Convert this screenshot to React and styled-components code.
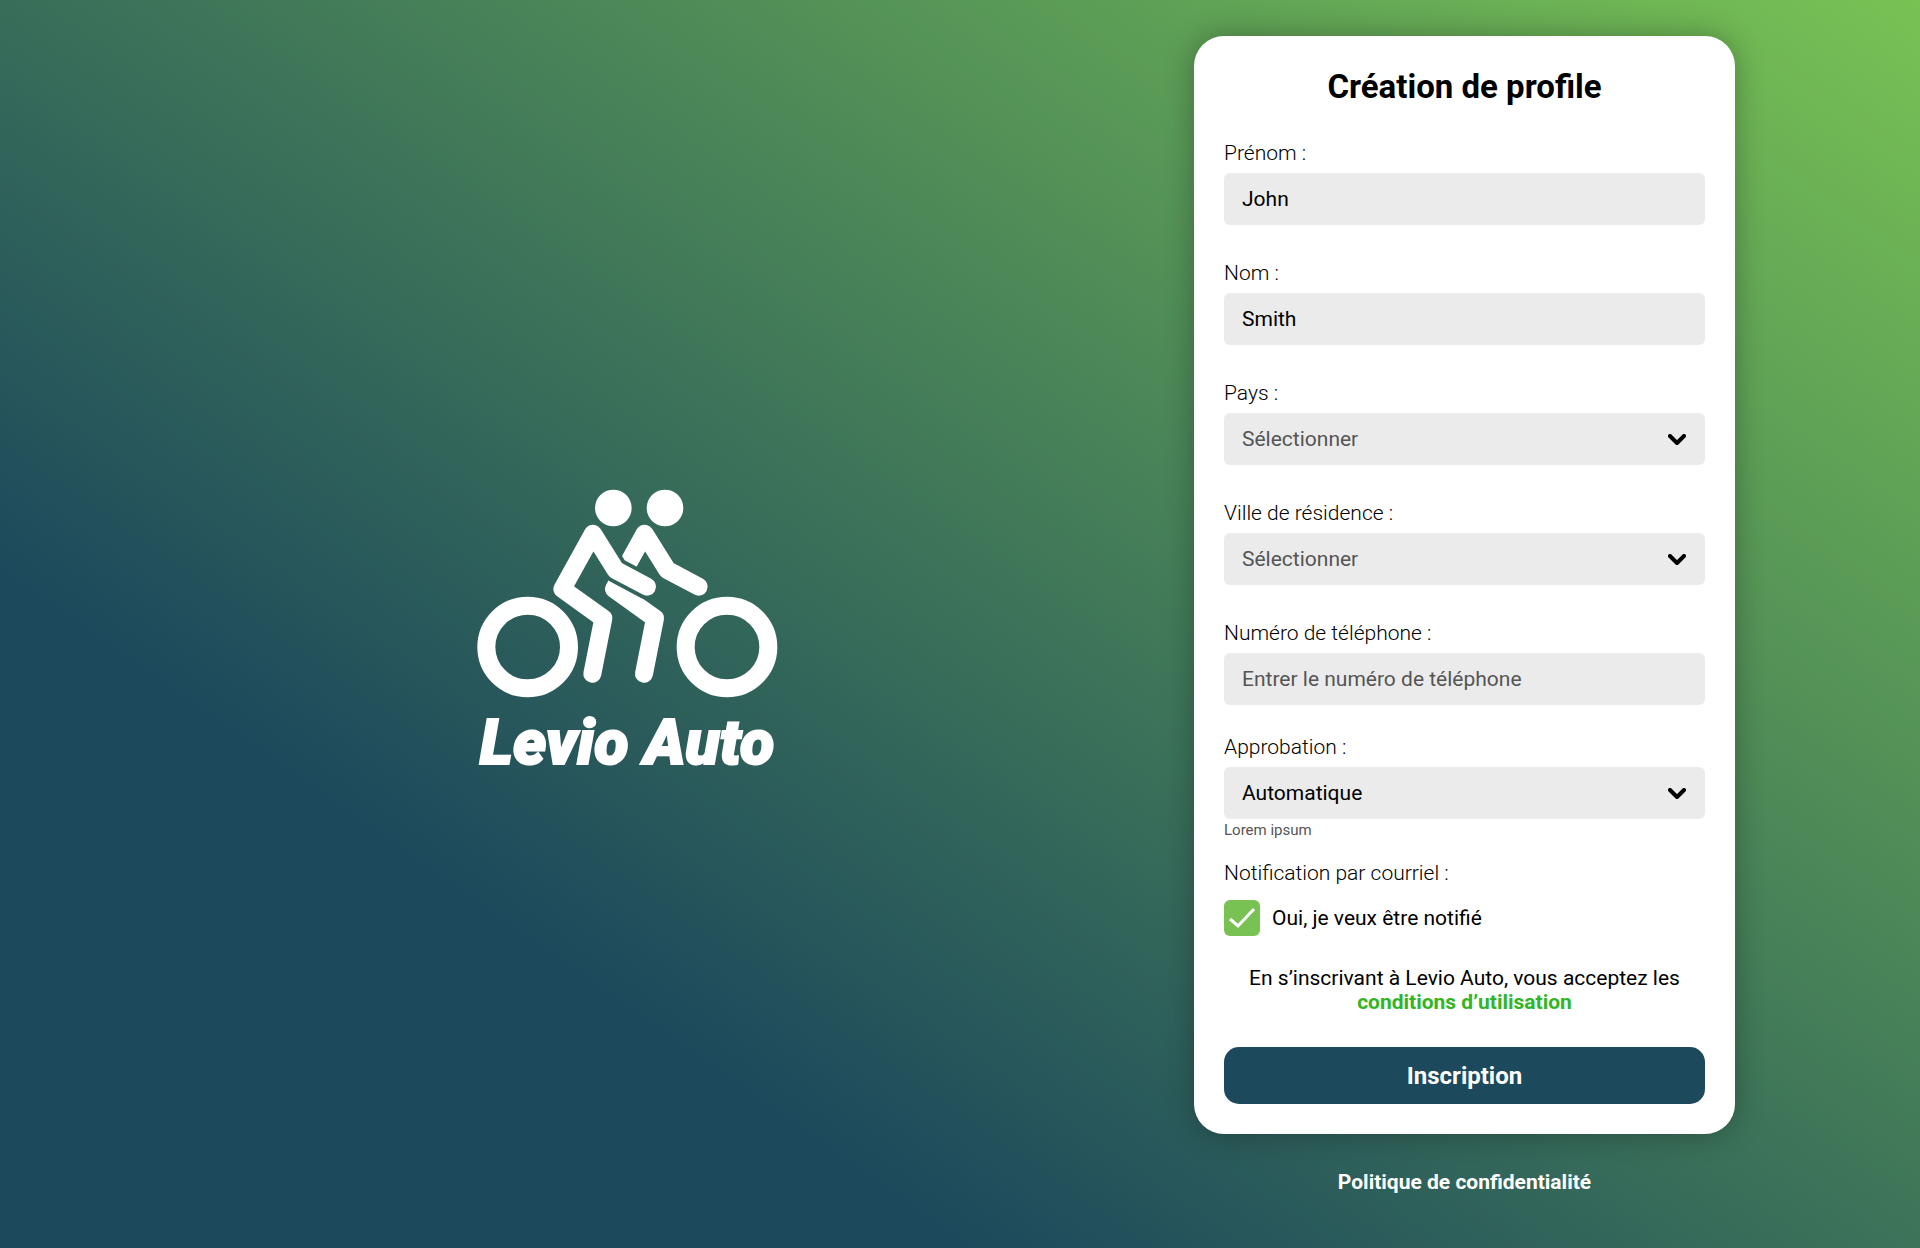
import { useState } from "react";
import styled, { createGlobalStyle } from "styled-components";

const App = () => {
  const [firstName, setFirstName] = useState("John");
  const [lastName, setLastName] = useState("Smith");
  const [country, setCountry] = useState("");
  const [city, setCity] = useState("");
  const [phone, setPhone] = useState("");
  const [approval, setApproval] = useState("auto");
  const [notify, setNotify] = useState(true);

  return (
    <>
      <GlobalStyle />
      <Page>
        <Brand>
          <Logo />
          <BrandName>Levio Auto</BrandName>
        </Brand>
        <Side>
          <Card onSubmit={(e) => e.preventDefault()}>
            <Title>Création de profile</Title>
            <Fields>
              <TextField id="firstName" label="Prénom :" value={firstName} onChange={setFirstName} />
              <TextField id="lastName" label="Nom :" value={lastName} onChange={setLastName} />
              <SelectField id="country" label="Pays :" value={country} onChange={setCountry}>
                <option value="">Sélectionner</option>
              </SelectField>
              <SelectField id="city" label="Ville de résidence :" value={city} onChange={setCity}>
                <option value="">Sélectionner</option>
              </SelectField>
              <TextField
                id="phone"
                type="tel"
                label="Numéro de téléphone :"
                placeholder="Entrer le numéro de téléphone"
                value={phone}
                onChange={setPhone}
              />
            </Fields>
            <Approval>
              <SelectField id="approval" label="Approbation :" value={approval} onChange={setApproval}>
                <option value="auto">Automatique</option>
              </SelectField>
              <Hint>Lorem ipsum</Hint>
            </Approval>
            <Notification>
              <Legend>Notification par courriel :</Legend>
              <CheckLabel>
                <CheckBox>
                  <input
                    type="checkbox"
                    checked={notify}
                    onChange={(e) => setNotify(e.target.checked)}
                  />
                  {notify && (
                    <svg viewBox="0 0 36 36" aria-hidden="true">
                      <path d="M6 19l8 7L30 9" />
                    </svg>
                  )}
                </CheckBox>
                Oui, je veux être notifié
              </CheckLabel>
            </Notification>
            <Terms>
              En s’inscrivant à Levio Auto, vous acceptez les{" "}
              <a href="#conditions">conditions d’utilisation</a>
            </Terms>
            <Submit type="submit">Inscription</Submit>
          </Card>
          <Privacy href="#confidentialite">Politique de confidentialité</Privacy>
        </Side>
      </Page>
    </>
  );
};

const TextField = ({ id, label, onChange, ...rest }) => (
  <Field>
    <Label htmlFor={id}>{label}</Label>
    <Input id={id} onChange={(e) => onChange(e.target.value)} {...rest} />
  </Field>
);

const SelectField = ({ id, label, value, onChange, children }) => (
  <Field>
    <Label htmlFor={id}>{label}</Label>
    <SelectWrapper>
      <Select id={id} value={value} $empty={!value} onChange={(e) => onChange(e.target.value)}>
        {children}
      </Select>
      <Chevron viewBox="0 0 18 12" aria-hidden="true">
        <path d="M2 2l7 7 7-7" />
      </Chevron>
    </SelectWrapper>
  </Field>
);

/** Two riders on a bike, the back rider's arm passes in front */
const Logo = () => (
  <LogoSvg viewBox="50 58 903 628" role="img" aria-label="Levio Auto">
    <mask id="arm" maskUnits="userSpaceOnUse" x="0" y="0" width="1000" height="700">
      <rect width="1000" height="700" fill="#fff" stroke="none" />
      <path d="M398 192L466 301L560 351" stroke="#000" strokeWidth="77" />
    </mask>
    <circle cx="202" cy="532" r="124" />
    <circle cx="800" cy="532" r="124" />
    <circle cx="459" cy="115" r="55" fill="#fff" stroke="none" />
    <circle cx="614" cy="115" r="55" fill="#fff" stroke="none" />
    <path d="M560 351L466 301L398 192L306 358L429 446L396 612" />
    <path mask="url(#arm)" d="M715 351L621 301L553 192L461 358L584 446L551 612" />
  </LogoSvg>
);

export default App;

const GlobalStyle = createGlobalStyle`
  * {
    box-sizing: border-box;
  }
  body {
    margin: 0;
    font-family: Roboto, sans-serif;
    color: #000;
  }
  input, select, button {
    font: inherit;
    color: inherit;
  }
`;

const Page = styled.main`
  display: flex;
  min-height: 100vh;
  padding: 36px 185px 36px 60px;
  background: linear-gradient(35deg, #1d495c 26%, #78c254 100%);
  @media (max-width: 1100px) {
    flex-direction: column;
    gap: 36px;
    padding: 36px 24px;
  }
`;

const Brand = styled.div`
  flex: 1;
  display: flex;
  flex-direction: column;
  align-items: center;
  justify-content: center;
  gap: 8px;
  padding-top: 20px;
`;

const LogoSvg = styled.svg`
  width: 301px;
  fill: none;
  stroke: #fff;
  stroke-width: 54;
  stroke-linecap: round;
  stroke-linejoin: round;
`;

const BrandName = styled.div`
  color: #fff;
  font-size: 63px;
  font-style: italic;
  font-weight: 900;
  line-height: 72px;
  white-space: nowrap;
  -webkit-text-stroke: 2px #fff;
  stroke-linejoin: round;
`;

const Side = styled.div`
  display: flex;
  flex-direction: column;
  align-items: center;
  gap: 36px;
  flex: 0 1 541px;
`;

const Card = styled.form`
  width: 100%;
  display: flex;
  flex-direction: column;
  padding: 30px;
  border-radius: 30px;
  background: #fff;
  box-shadow: 0 0 30px rgba(0, 0, 0, 0.3);
`;

const Title = styled.h1`
  margin: 0 0 33px;
  font-size: 33px;
  font-weight: 700;
  line-height: 42px;
  text-align: center;
`;

const Fields = styled.div`
  display: flex;
  flex-direction: column;
  gap: 36px;
`;

const Field = styled.div`
  display: flex;
  flex-direction: column;
  gap: 8px;
`;

const Label = styled.label`
  font-size: 21px;
  font-weight: 300;
  line-height: 24px;
`;

const Input = styled.input`
  width: 100%;
  height: 52px;
  padding: 0 18px;
  border: 0;
  border-radius: 6px;
  background: #ebebeb;
  font-size: 21px;
  &::placeholder {
    color: #555;
    opacity: 1;
  }
`;

const SelectWrapper = styled.div`
  position: relative;
`;

const Select = styled.select`
  display: block;
  width: 100%;
  height: 52px;
  padding: 0 48px 0 18px;
  border: 0;
  border-radius: 6px;
  background: #ebebeb;
  appearance: none;
  font-size: 21px;
  color: ${({ $empty }) => ($empty ? "#555" : "#000")};
`;

const Chevron = styled.svg`
  position: absolute;
  top: 21px;
  right: 19px;
  width: 18px;
  height: 12px;
  fill: none;
  stroke: #000;
  stroke-width: 4;
  stroke-linecap: round;
  stroke-linejoin: round;
  pointer-events: none;
`;

const Approval = styled.div`
  margin-top: 30px;
`;

const Hint = styled.div`
  margin-top: 2px;
  color: #555;
  font-size: 15px;
  line-height: 18px;
`;

const Notification = styled.fieldset`
  margin: 22px 0 0;
  padding: 0;
  border: 0;
`;

const Legend = styled.legend`
  padding: 0;
  margin-bottom: 15px;
  font-size: 21px;
  font-weight: 300;
  line-height: 24px;
`;

const CheckLabel = styled.label`
  display: flex;
  align-items: center;
  gap: 12px;
  font-size: 21px;
`;

const CheckBox = styled.span`
  display: grid;
  width: 36px;
  height: 36px;
  & > * {
    grid-area: 1 / 1;
  }
  & > input {
    width: 36px;
    height: 36px;
    margin: 0;
    appearance: none;
    border-radius: 6px;
    background: #ebebeb;
  }
  & > input:checked {
    background: #78c254;
  }
  & > svg {
    fill: none;
    stroke: #fff;
    stroke-width: 3;
    pointer-events: none;
  }
`;

const Terms = styled.p`
  margin: 30px 0 33px;
  font-size: 21px;
  line-height: 24px;
  text-align: center;
  & > a {
    color: #32b524;
    font-weight: 700;
    text-decoration: none;
  }
`;

const Submit = styled.button`
  height: 57px;
  border: 0;
  border-radius: 15px;
  background: #1d495c;
  color: #fff;
  font-size: 24px;
  font-weight: 700;
`;

const Privacy = styled.a`
  color: #fff;
  font-size: 21px;
  font-weight: 700;
  line-height: 24px;
  text-decoration: none;
`;
